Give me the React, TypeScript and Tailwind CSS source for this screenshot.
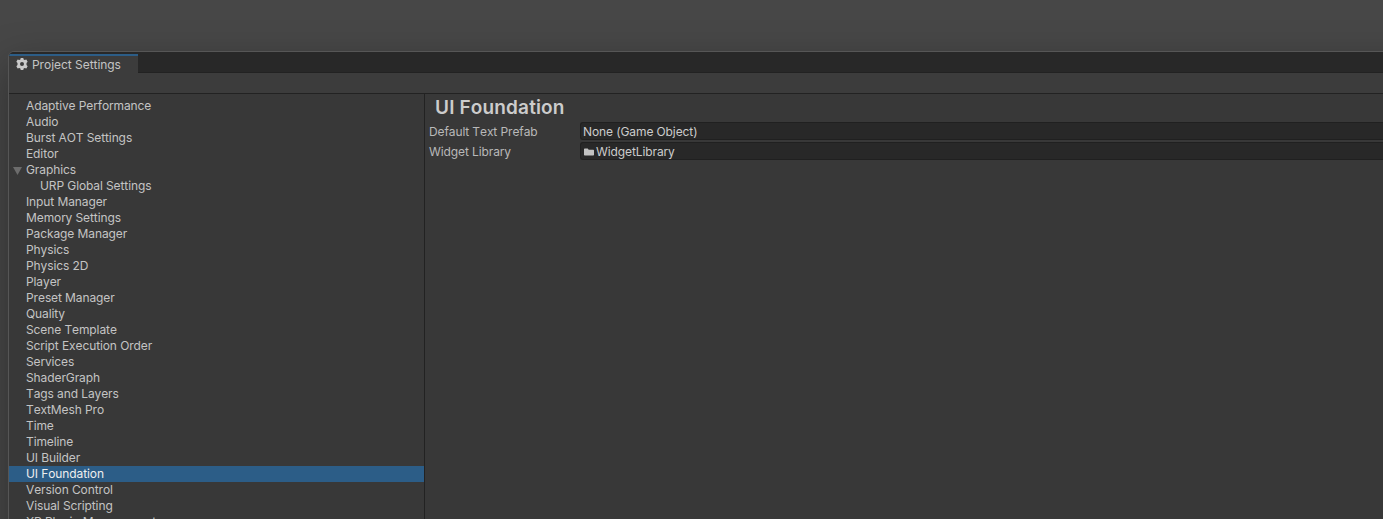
const pages = ["Adaptive Performance", "Audio", "Burst AOT Settings", "Editor", "Graphics", "URP Global Settings", "Input Manager", "Memory Settings", "Package Manager", "Physics", "Physics 2D", "Player", "Preset Manager", "Quality", "Scene Template", "Script Execution Order", "Services", "ShaderGraph", "Tags and Layers", "TextMesh Pro", "Time", "Timeline", "UI Builder", "UI Foundation", "Version Control", "Visual Scripting", "XR Plugin Management"];

function Gear() {
  return (
    <svg className="mb-px h-3 w-3 shrink-0" viewBox="0 0 12 12" fill="#c9c9c9">
      <path
        fillRule="evenodd"
        d="M4.700 0h2.600l.35 1.500 1 .6 1.700-.5 1.300 2.200L10.500 5v2l1.150 1.200-1.300 2.200-1.700-.5-1 .6L7.300 12H4.700l-.35-1.500-1-.6-1.700.5L.35 8.200 1.500 7V5L.35 3.800l1.300-2.200 1.700.5 1-.6zM6 4a2 2 0 1 0 0 4 2 2 0 0 0 0-4z"
      />
    </svg>
  );
}

function Item({ label }: { label: string }) {
  const selected = label === "UI Foundation";
  const nested = label === "URP Global Settings";
  return (
    <li className={`flex h-4 shrink-0 items-center ${selected ? "bg-[#2c5d87] text-[#eeeeee]" : ""}`}>
      <span className={`flex shrink-0 items-center pl-1 ${nested ? "w-[31px]" : "w-[17px]"}`}>
        {label === "Graphics" && (
          <svg className="mt-px h-2 w-[9px]" viewBox="0 0 9 8" fill="#6c6c6c">
            <path d="M0 0h9L4.500 8z" />
          </svg>
        )}
      </span>
      <span>{label}</span>
    </li>
  );
}

function Field({ label, value, folder }: { label: string; value: string; folder?: boolean }) {
  return (
    <div className="flex h-[18px] items-center">
      <span className="w-[151px] shrink-0 pt-0.5 text-[#b9b9b9]">{label}</span>
      <div className="flex h-[18px] grow items-center rounded-l-[3px] border border-r-0 border-[#202020] bg-[#282828] pt-0.5 pl-0.5 text-[#cccccc]">
        {folder && (
          <svg className="mr-[2px] ml-px h-2 w-[10px]" viewBox="0 0 10 8" fill="#c2c2c2">
            <path d="M.7.500h3l1 1.200h4.600q.7 0 .7.700v4.400q0 .7-.7.700H.7Q0 7.500 0 6.800V1.200Q0 .5.700.5z" />
          </svg>
        )}
        <span>{value}</span>
      </div>
    </div>
  );
}

export default function App() {
  return (
    <div className="h-[519px] w-full overflow-hidden bg-[#474747] pt-[51px] pl-2 font-['Inter',sans-serif] text-[12px] leading-4 tracking-[-0.1px] whitespace-nowrap text-[#c4c4c4] [font-kerning:none]">
      <div className="flex h-[600px] w-[1500px] flex-col overflow-hidden rounded-tl-md border border-[#565656] bg-[#383838] shadow-[0_14px_40px_rgba(0,0,0,0.35)]">
        <div className="flex h-[21px] shrink-0 border-b border-[#222222] bg-[#282828]">
          <div className="mt-0.5 flex h-[19px] w-[129px] shrink-0 items-center border-t-2 border-[#2c5d87] bg-[#3c3c3c] pl-[7px]">
            <Gear />
            <span className="ml-1 tracking-[-0.05px]">Project Settings</span>
          </div>
        </div>
        <div className="h-[21px] shrink-0 border-b border-[#222222] bg-[#3c3c3c]" />
        <div className="flex min-h-0 grow">
          <ul className="flex w-[416px] shrink-0 flex-col overflow-hidden border-r border-[#222222] pt-1">
            {pages.map((label) => (
              <Item key={label} label={label} />
            ))}
          </ul>
          <main className="flex grow flex-col pl-1">
            <h1 className="h-7 pl-1.5 text-[19px] leading-[27px] font-semibold tracking-[0.15px] text-[#cccccc]">UI Foundation</h1>
            <div className="flex flex-col gap-0.5">
              <Field label="Default Text Prefab" value="None (Game Object)" />
              <Field label="Widget Library" value="WidgetLibrary" folder />
            </div>
          </main>
        </div>
      </div>
    </div>
  );
}
